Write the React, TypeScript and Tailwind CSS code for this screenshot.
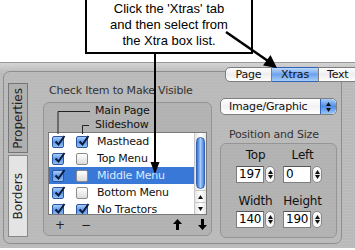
import React from "react";

interface Row {
  name: string;
  main: boolean;
  slide: boolean;
  selected?: boolean;
}

const rows: Row[] = [
  { name: "Masthead", main: true, slide: true },
  { name: "Top Menu", main: true, slide: false },
  { name: "Middle Menu", main: true, slide: false, selected: true },
  { name: "Bottom Menu", main: true, slide: false },
  { name: "No Tractors", main: true, slide: true },
];

function Check({ on }: { on: boolean }) {
  if (!on) {
    return (
      <span className="block w-[12px] h-[12px] rounded-[2px] border border-[#8c8c8c] bg-gradient-to-b from-white to-[#dcdcdc]" />
    );
  }
  return (
    <span className="relative block w-[12px] h-[12px] rounded-[2px] border border-[#2d55a0] bg-gradient-to-b from-[#a9cdf7] via-[#5d97e8] to-[#8fc0f5]">
      <svg className="absolute left-[1px] top-[-2px]" width="12" height="12" viewBox="0 0 12 12">
        <path d="M1.5 6.5 L4.5 9.5 L10.5 1" stroke="#0b1a3a" strokeWidth="2" fill="none" />
      </svg>
    </span>
  );
}

function Stepper() {
  return (
    <span className="flex flex-col items-center justify-between w-[10px] h-[17px] rounded-full border border-[#8a8a8a] bg-gradient-to-b from-white via-[#ececec] to-white py-[3px]">
      <svg width="5" height="4" viewBox="0 0 5 4"><path d="M2.5 0 L5 4 L0 4 Z" fill="#111" /></svg>
      <svg width="5" height="4" viewBox="0 0 5 4"><path d="M0 0 L5 0 L2.5 4 Z" fill="#111" /></svg>
    </span>
  );
}

function NumField({ value }: { value: string }) {
  return (
    <div className="flex items-center gap-[1px]">
      <div className="w-[28px] h-[17px] bg-white border border-[#7d7d7d] border-t-[#555] pl-[2px] text-[12px] leading-[15px] text-black">
        {value}
      </div>
      <Stepper />
    </div>
  );
}

function BoldArrow({ down }: { down?: boolean }) {
  return (
    <svg width="9" height="11" viewBox="0 0 9 11" className={down ? "rotate-180" : ""}>
      <path d="M4.5 0 L9 5 L6 5 L6 11 L3 11 L3 5 L0 5 Z" fill="#000" />
    </svg>
  );
}

export default function App() {
  return (
    <div className="relative w-[355px] h-[250px] overflow-hidden bg-white font-['DejaVu_Sans',sans-serif] tracking-[-0.2px] text-[#222]">
      {/* callout */}
      <div className="h-[64px]">
        <div className="ml-[85px] mt-[-2px] w-[168px] h-[56px] border-2 border-black bg-white pt-[1px] text-center font-['Liberation_Sans',Arial,sans-serif] text-[13px] leading-[16px] tracking-normal text-black">
          <div>Click the 'Xtras' tab</div>
          <div>and then select from</div>
          <div>the Xtra box list.</div>
        </div>
      </div>

      {/* metal panel */}
      <div className="relative h-[186px] bg-[repeating-linear-gradient(180deg,#bebebe_0px,#bebebe_1px,#b6b6b6_2px,#bbbbbb_3px)] border-t border-[#9a9a9a]">
        <div className="absolute left-0 right-0 top-0 h-[9px] bg-gradient-to-b from-[#d4d4d4] to-[#bdbdbd]" />

        <div className="relative flex mt-[8px] ml-[3px] w-[339px] h-[173px] rounded-[7px] border border-[#8e8e8e] bg-[#bababa]/60">
          {/* vertical tabs */}
          <div className="flex flex-col gap-[2px] ml-[4px] mt-[11px] w-[20px]">
            <div className="flex items-center justify-center h-[70px] border border-[#777] bg-[#b0b0b0]">
              <span className="[writing-mode:vertical-rl] rotate-180 text-[12px] tracking-normal text-[#222]">Properties</span>
            </div>
            <div className="flex items-center justify-center h-[82px] border border-[#888] bg-[#e4e4e4]">
              <span className="[writing-mode:vertical-rl] rotate-180 text-[12px] tracking-normal text-[#222]">Borders</span>
            </div>
          </div>

          {/* list column */}
          <div className="ml-[15px] w-[169px]">
            <div className="h-[30px] pt-[12px] pl-[6px] text-[11px] leading-[14px] text-[#333]">Check Item to Make Visible</div>
            <div className="relative h-[134px] rounded-[6px] border border-[#959595] bg-black/[0.04]">
              <svg className="absolute left-0 top-0" width="60" height="32">
                <path d="M14 31 V8.5 H46" stroke="#222" strokeWidth="1" fill="none" />
                <path d="M38.5 31 V22.5 H45" stroke="#222" strokeWidth="1" fill="none" />
              </svg>
              <div className="pt-[1px] pl-[51px] text-[11px] leading-[14px] text-[#111]">
                <div>Main Page</div>
                <div>Slideshow</div>
              </div>
              <div className="flex ml-[4px] w-[159px] h-[83px] border border-[#7a7a7a] bg-white overflow-hidden">
                <div className="flex-1">
                  {rows.map((r) => (
                    <div
                      key={r.name}
                      className={
                        "flex items-center h-[17px] pl-[3px] " +
                        (r.selected ? "bg-[#3a78d8] text-[#dce8ff]" : "text-[#111]")
                      }
                    >
                      <Check on={r.main} />
                      <span className="ml-[12px]"><Check on={r.slide} /></span>
                      <span className="ml-[9px] text-[11px] leading-[14px]">{r.name}</span>
                    </div>
                  ))}
                </div>
                <div className="flex flex-col w-[12px] border-l border-[#c8c8c8] bg-gradient-to-r from-[#e6e6e6] via-white to-[#e6e6e6]">
                  <div className="mt-[4px] mx-auto w-[9px] h-[52px] rounded-full border border-[#3263b5] bg-gradient-to-r from-[#2f6fd8] via-[#a9cdf8] to-[#3b7be0]" />
                  <div className="flex flex-1 flex-col justify-end">
                    <div className="flex items-center justify-center h-[12px] border-t border-[#c8c8c8]">
                      <svg width="5" height="4" viewBox="0 0 5 4"><path d="M2.5 0 L5 4 L0 4 Z" fill="#111" /></svg>
                    </div>
                    <div className="flex items-center justify-center h-[12px] border-t border-[#c8c8c8]">
                      <svg width="5" height="4" viewBox="0 0 5 4"><path d="M0 0 L5 0 L2.5 4 Z" fill="#111" /></svg>
                    </div>
                  </div>
                </div>
              </div>
              <div className="flex items-center h-[19px] text-[12px] text-[#222]">
                <span className="ml-[11px] w-[8px] text-center">+</span>
                <span className="ml-[18px] w-[8px] text-center">−</span>
                <span className="ml-[84px]"><BoldArrow /></span>
                <span className="ml-[16px]"><BoldArrow down /></span>
              </div>
            </div>
          </div>

          {/* right column */}
          <div className="ml-[8px] w-[117px]">
            <div className="flex mt-[26px] h-[17px] rounded-[5px] border border-[#7f7f7f] bg-gradient-to-b from-white via-[#f2f2f2] to-white overflow-hidden">
              <div className="flex-1 pl-[8px] text-[11px] leading-[15px] text-[#111]">Image/Graphic</div>
              <div className="flex flex-col items-center justify-center gap-[2px] w-[16px] rounded-r-[5px] border-l border-[#3263b5] bg-gradient-to-b from-[#a9cdf8] via-[#4e8ce6] to-[#9cc6f6]">
                <svg width="5" height="4" viewBox="0 0 5 4"><path d="M2.5 0 L5 4 L0 4 Z" fill="#111" /></svg>
                <svg width="5" height="4" viewBox="0 0 5 4"><path d="M0 0 L5 0 L2.5 4 Z" fill="#111" /></svg>
              </div>
            </div>
            <div className="mt-[13px] pl-[9px] text-[11px] leading-[14px] text-[#333]">Position and Size</div>
            <div className="mt-[1px] h-[95px] rounded-[6px] border border-[#959595] bg-black/[0.04] pl-[15px] pt-[4px]">
              <div className="flex gap-[8px]">
                <div className="flex flex-col items-center w-[39px]">
                  <div className="text-[12px] leading-[14px] text-[#111]">Top</div>
                  <div className="mt-[4px]"><NumField value="197" /></div>
                </div>
                <div className="flex flex-col items-center w-[39px]">
                  <div className="text-[12px] leading-[14px] text-[#111]">Left</div>
                  <div className="mt-[4px]"><NumField value="0" /></div>
                </div>
              </div>
              <div className="flex gap-[8px] mt-[11px]">
                <div className="flex flex-col items-center w-[39px]">
                  <div className="text-[12px] leading-[14px] text-[#111]">Width</div>
                  <div className="mt-[3px]"><NumField value="140" /></div>
                </div>
                <div className="flex flex-col items-center w-[39px]">
                  <div className="text-[12px] leading-[14px] text-[#111]">Height</div>
                  <div className="mt-[3px]"><NumField value="190" /></div>
                </div>
              </div>
            </div>
          </div>
        </div>

        {/* segmented tabs over the frame edge */}
        <div className="absolute left-[225px] top-[4px] flex h-[15px] text-[11px] leading-[13px] text-[#111]">
          <div className="w-[47px] text-center rounded-l-[5px] border border-[#7f7f7f] bg-gradient-to-b from-white via-[#eeeeee] to-white">Page</div>
          <div className="w-[46px] text-center border-y border-[#3263b5] bg-gradient-to-b from-[#bcd8fa] via-[#6ea3ec] to-[#a7cdf8]">Xtras</div>
          <div className="w-[40px] pl-[8px] border border-[#7f7f7f] bg-gradient-to-b from-white via-[#eeeeee] to-white">Text</div>
        </div>
      </div>

      {/* callout arrows */}
      <svg className="absolute left-0 top-0 pointer-events-none" width="355" height="250">
        <line x1="155" y1="54" x2="155" y2="164" stroke="#000" strokeWidth="2" />
        <path d="M150.5 162 L159.5 162 L155 174 Z" fill="#000" />
        <line x1="226" y1="32" x2="268" y2="61" stroke="#000" strokeWidth="2.5" />
        <path d="M263 65.5 L270.5 55 L277 68 Z" fill="#000" />
      </svg>
    </div>
  );
}
